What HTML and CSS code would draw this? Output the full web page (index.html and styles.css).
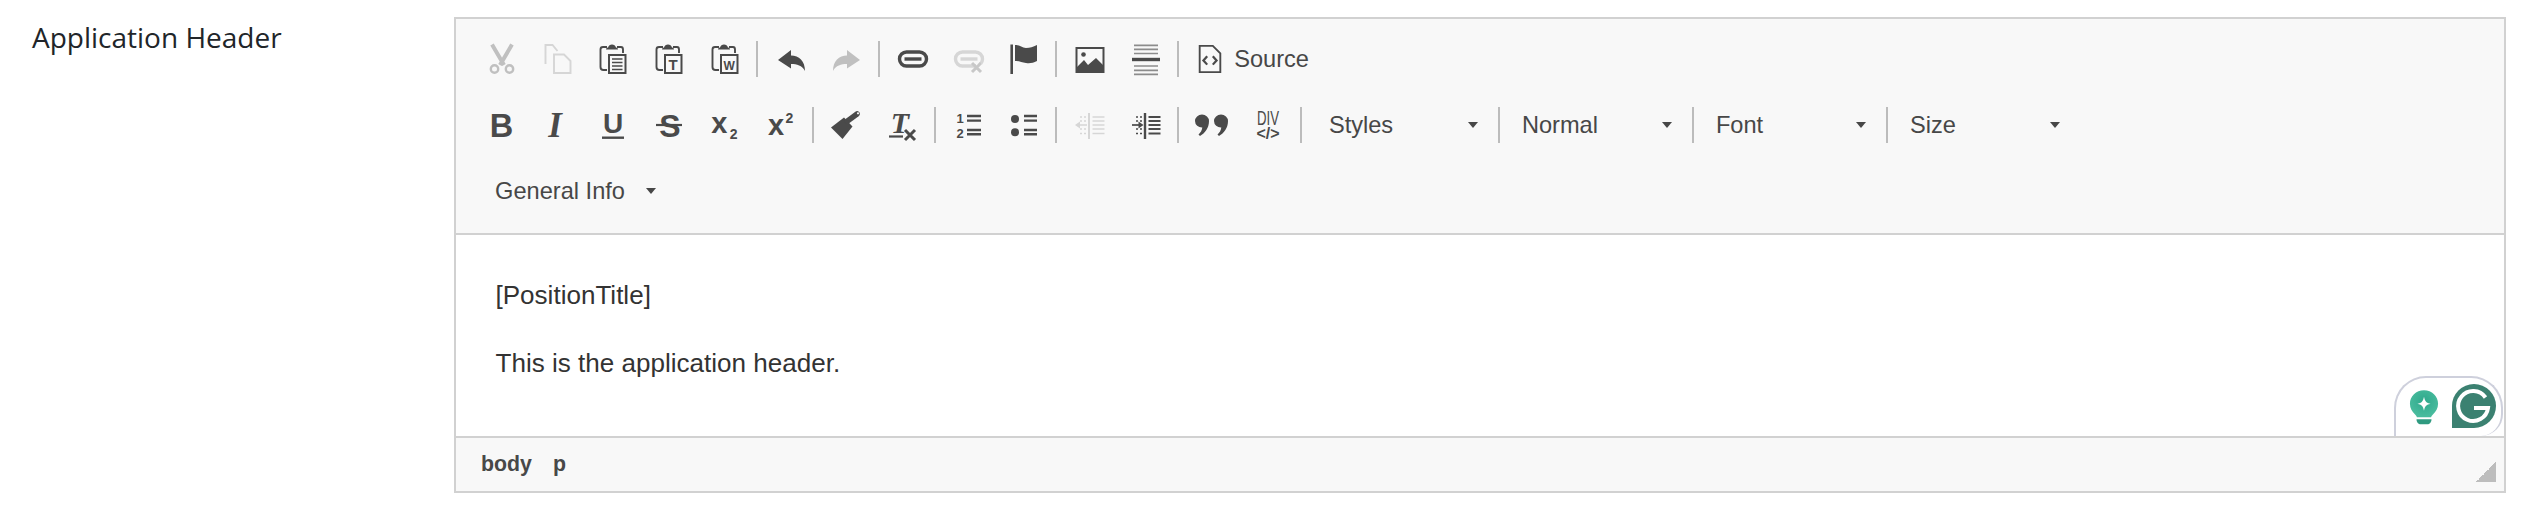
FILE: index.html
```html
<!DOCTYPE html>
<html lang="en">
<head>
<meta charset="utf-8">
<title>Application Header</title>
<link rel="stylesheet" href="styles.css">
</head>
<body>
<div class="field">
  <label class="field-label">Application Header</label>
  <div class="editor">
    <div class="toolbar">
      <div class="row">
        <span class="btn"><svg class="ic off" viewBox="0 0 32 32"><path class="s" stroke-width="4" d="M6 1.500l12 20.500M26 1.500L14 22"/><circle class="s" stroke-width="2.400" cx="8.500" cy="26" r="3.700"/><circle class="s" stroke-width="2.400" cx="23.500" cy="26" r="3.700"/></svg></span>
        <span class="btn"><svg class="ic faint" viewBox="0 0 32 32"><path class="s" stroke-width="1.900" d="M3.500 21V2h7l5 6M12 11.500h10l6.500 6.500v12H12z"/></svg></span>
        <span class="btn"><svg class="ic" viewBox="0 0 32 32"><path class="s" stroke-width="1.900" d="M10 4H6Q3.500 4 3.500 6.500V24Q3.500 27 6.500 27H10M20 4h4q2 0 2 2.500V10"/><path d="M9 6.500q0-2 2-2 1-3 4-3t4 3q2 0 2 2z"/><rect class="s" stroke-width="2" x="12" y="12" width="16.500" height="18"/><path class="s" stroke-width="1.700" d="M15 16h10.500M15 19.500h10.500M15 23h10.500M15 26.500h10.500"/></svg></span>
        <span class="btn"><svg class="ic" viewBox="0 0 32 32"><path class="s" stroke-width="1.900" d="M10 4H6Q3.500 4 3.500 6.500V24Q3.500 27 6.500 27H10M20 4h4q2 0 2 2.500V10"/><path d="M9 6.500q0-2 2-2 1-3 4-3t4 3q2 0 2 2z"/><rect class="s" stroke-width="2" x="12" y="12" width="16.500" height="18"/><text class="gl gl-b" x="20.200" y="27" font-size="15">T</text></svg></span>
        <span class="btn"><svg class="ic" viewBox="0 0 32 32"><path class="s" stroke-width="1.900" d="M10 4H6Q3.500 4 3.500 6.500V24Q3.500 27 6.500 27H10M20 4h4q2 0 2 2.500V10"/><path d="M9 6.500q0-2 2-2 1-3 4-3t4 3q2 0 2 2z"/><rect class="s" stroke-width="2" x="12" y="12" width="16.500" height="18"/><text class="gl gl-b" x="20.200" y="26.500" font-size="12">W</text></svg></span>
        <span class="sep"></span>
        <span class="btn"><svg class="ic" viewBox="0 0 32 32"><path d="M3 17L16 7v5.500c8 0 14 5.500 14 15.500-3-5.500-8-7-14-7v4.500z"/></svg></span>
        <span class="btn"><svg class="ic off" viewBox="0 0 32 32"><path d="M29 17L16 7v5.500C8 12.500 2 18 2 28c3-5.500 8-7 14-7v4.500z"/></svg></span>
        <span class="sep"></span>
        <span class="btn"><svg class="ic" viewBox="0 0 32 32"><rect class="s" stroke-width="3.400" x="2.500" y="9" width="27" height="14" rx="7"/><path class="s" stroke-width="3.400" d="M7.500 16h17"/></svg></span>
        <span class="btn"><svg class="ic faint" viewBox="0 0 32 32"><rect class="s" stroke-width="3.400" x="2.500" y="9" width="27" height="14" rx="7"/><path class="s" stroke-width="3.400" d="M7.500 16h17"/><path class="bgs" stroke-width="9" d="M23 25h6"/><path class="s off-s" stroke-width="3" d="M19 20l9 9M28 20l-9 9"/></svg></span>
        <span class="btn"><svg class="ic" viewBox="0 0 32 32"><path class="s" stroke-width="2.600" d="M3.700 1.500V31"/><path d="M7 2c5 0 7 3 11 3s7-1 11-3v16c-4 2-7 2.500-11 2s-6-2-11-2z"/></svg></span>
        <span class="sep"></span>
        <span class="btn"><svg class="ic" viewBox="0 0 32 32"><rect class="s" stroke-width="2" x="2.500" y="5" width="27" height="24"/><circle cx="9.500" cy="11.500" r="2.300"/><path d="M3 28v-4l7-7 4 5 8-7 7 7v6z"/></svg></span>
        <span class="btn"><svg class="ic" viewBox="0 0 32 32"><path class="s thin" stroke-width="1.700" d="M4 2.300h24M4 6.400h24M4 10.500h24M4 23h24M4 27.300h24M4 31.300h24"/><path class="s" stroke-width="3.400" d="M2 16.500h28"/></svg></span>
        <span class="sep"></span>
        <span class="btn btn-text"><svg class="ic ic-source" viewBox="0 0 32 32"><path class="s" stroke-width="2" d="M5 2h14l8 8v20H5z"/><path class="s" stroke-width="2.400" d="M13 13l-4 4.500 4 4.500M19 13l4 4.500-4 4.500"/></svg><span class="btn-label">Source</span></span>
      </div>
      <div class="row">
        <span class="btn"><svg class="ic" viewBox="0 0 32 32"><text class="gl gl-b" x="15.500" y="27.700" font-size="32.500">B</text></svg></span>
        <span class="btn"><svg class="ic" viewBox="0 0 32 32"><text class="gl gl-si" x="13" y="28" font-size="35">I</text></svg></span>
        <span class="btn"><svg class="ic" viewBox="0 0 32 32"><text class="gl gl-b" x="16" y="24.300" font-size="28">U</text><path class="s" stroke-width="2.400" d="M5 28.700h22"/></svg></span>
        <span class="btn"><svg class="ic" viewBox="0 0 32 32"><text class="gl gl-b" x="17" y="27.500" font-size="32">S</text><path class="s" stroke-width="2.200" d="M3 16h26"/></svg></span>
        <span class="btn"><svg class="ic" viewBox="0 0 32 32"><text class="gl gl-b" x="10.400" y="24.300" font-size="29">x</text><text class="gl gl-b" x="24.700" y="30.300" font-size="14">2</text></svg></span>
        <span class="btn"><svg class="ic" viewBox="0 0 32 32"><text class="gl gl-b" x="11" y="26" font-size="29">x</text><text class="gl gl-b" x="24.300" y="14.300" font-size="14">2</text></svg></span>
        <span class="sep"></span>
        <span class="btn"><svg class="ic" viewBox="0 0 32 32"><path d="M0 18.500L11.500 30l10-12.500-8.500-9z"/><path class="s" stroke-width="5.500" stroke-linecap="round" d="M16.500 12L26 5"/><circle class="dot-hole" cx="27" cy="4.300" r="1.100"/></svg></span>
        <span class="btn"><svg class="ic" viewBox="0 0 32 32"><text class="gl gl-si" x="13" y="24" font-size="30">T</text><path class="s" stroke-width="2.200" d="M2 27.500h14"/><path class="s" stroke-width="3" d="M18 21l10 10M28 21L18 31"/></svg></span>
        <span class="sep"></span>
        <span class="btn"><svg class="ic" viewBox="0 0 32 32"><text class="gl gl-b" x="7" y="14" font-size="13">1</text><text class="gl gl-b" x="7" y="29" font-size="13">2</text><path class="s" stroke-width="2.400" d="M14 7h14M14 11.600h14M14 21h14M14 25.300h14"/></svg></span>
        <span class="btn"><svg class="ic" viewBox="0 0 32 32"><circle cx="7" cy="10" r="4"/><circle cx="7" cy="23.300" r="4"/><path class="s" stroke-width="2.400" d="M16 7h13M16 11.600h13M16 21h13M16 25.300h13"/></svg></span>
        <span class="sep"></span>
        <span class="btn"><svg class="ic faint" viewBox="0 0 32 32"><path class="s" stroke-width="2" d="M15 4v26"/><path class="s" stroke-width="1.700" d="M18.500 8h12M18.500 12h12M18.500 16h12M18.500 20h12M18.500 24.500h12"/><path class="s" stroke-width="1.500" d="M6 16h7"/><path d="M1 16l5-3.500v7z"/><path class="s" stroke-width="1.600" stroke-dasharray="2 2" d="M6 8h7M6 12h7M6 20h7M6 24.500h7"/></svg></span>
        <span class="btn"><svg class="ic" viewBox="0 0 32 32"><path class="s" stroke-width="2.400" d="M15 4v26"/><path class="s" stroke-width="2" d="M18.500 8h12M18.500 12h12M18.500 16h12M18.500 20h12M18.500 24.500h12"/><path class="s" stroke-width="1.700" d="M2 16h7"/><path d="M13.500 16l-5-3.500v7z"/><path class="s" stroke-width="1.600" stroke-dasharray="2 2" d="M6 8h7M6 12h7M6 20h7M6 24.500h7"/></svg></span>
        <span class="sep"></span>
        <span class="btn"><svg class="ic" viewBox="0 0 32 32"><path d="M-1 12a7 6.500 0 1 1 14 0c0 7-4 12-9 15l-1.500-1.500c2-2 3.500-4 3.800-7A7 6.500 0 0 1-1 12zM18 12a7 6.500 0 1 1 14 0c0 7-4 12-9 15l-1.500-1.500c2-2 3.500-4 3.800-7A7 6.500 0 0 1 18 12z"/></svg></span>
        <span class="btn"><svg class="ic" viewBox="0 0 32 32"><text class="gl gl-n" x="16" y="16" font-size="20" textLength="22" lengthAdjust="spacingAndGlyphs">DIV</text><text class="gl gl-b" x="16" y="30" font-size="16" textLength="23" lengthAdjust="spacingAndGlyphs">&lt;/&gt;</text></svg></span>
        <span class="sep sep-wide"></span>
        <span class="combo combo-first"><span class="combo-text">Styles</span><span class="caret"></span></span>
        <span class="sep sep-flush"></span>
        <span class="combo"><span class="combo-text">Normal</span><span class="caret"></span></span>
        <span class="sep sep-flush"></span>
        <span class="combo"><span class="combo-text">Font</span><span class="caret"></span></span>
        <span class="sep sep-flush"></span>
        <span class="combo"><span class="combo-text">Size</span><span class="caret"></span></span>
      </div>
      <div class="row">
        <span class="combo combo-auto"><span class="combo-text">General Info</span><span class="caret"></span></span>
      </div>
    </div>
    <div class="content">
      <p>[PositionTitle]</p>
      <p>This is the application header.</p>
      <div class="grammarly">
        <svg class="bulb" viewBox="0 0 32 38"><defs><radialGradient id="bulbFill" cx="50%" cy="40%" r="55%"><stop offset="0" stop-color="#2fa98c"/><stop offset="1" stop-color="#48bb9d"/></radialGradient></defs><path fill="url(#bulbFill)" d="M16 1C7.500 1 1 7.500 1 15.500c0 5 2.500 8.500 5 11 1.500 1.500 2 2.500 2.500 3.500h15c.5-1 1-2 2.500-3.500 2.500-2.500 5-6 5-11C31 7.500 24.500 1 16 1z"/><path fill="#fff" d="M16 8c1 5 2.500 6.500 7 7.500-4.500 1-6 2.500-7 7.500-1-5-2.500-6.500-7-7.500 4.500-1 6-2.500 7-7.500z"/><path fill="#2f9a80" d="M8 32h16c0 3-2 5.500-4.500 5.500h-7C10 37.500 8 35 8 32z"/></svg>
        <span class="g-badge"><svg viewBox="0 0 44 44"><path class="g-ring" d="M33.500 13.500A15 15 0 1 0 36 24H22"/></svg></span>
      </div>
    </div>
    <div class="statusbar">
      <span class="crumb">body</span>
      <span class="crumb">p</span>
      <span class="resizer"></span>
    </div>
  </div>
</div>
</body>
</html>
```
FILE: styles.css
```css
html, body {
  margin: 0;
  padding: 0;
  background: #fff;
}
.field {
  display: flex;
  align-items: flex-start;
  padding-top: 17px;
}
.field-label {
  width: 454px;
  flex: none;
  box-sizing: border-box;
  padding: 1px 0 0 32px;
  font: 400 28px/38px "Open Sans", sans-serif;
  color: #212529;
}
.editor {
  width: 2052px;
  height: 476px;
  box-sizing: border-box;
  border: 2px solid #d1d1d1;
  display: flex;
  flex-direction: column;
  font-family: "Liberation Sans", Arial, sans-serif;
}
.toolbar {
  height: 216px;
  box-sizing: border-box;
  flex: none;
  padding: 7px 0 0 18.1px;
  background: #f8f8f8;
  border-bottom: 2px solid #d1d1d1;
}
.row {
  height: 66px;
  display: flex;
  align-items: center;
}
.btn {
  flex: none;
  width: 55.75px;
  height: 48px;
  display: flex;
  align-items: center;
  justify-content: center;
}
.btn-text {
  width: auto;
  padding-left: 11px;
}
.btn-label {
  margin-left: 9px;
  font-size: 23.6px;
  color: #474747;
}
.ic {
  width: 32px;
  height: 32px;
  fill: #4a4a4a;
  flex: none;
  overflow: visible;
}
.ic-source {
  width: 30px;
  height: 32px;
}
.s {
  fill: none;
  stroke: #4a4a4a;
}
.thin {
  stroke: #8c8c8c;
}
.off {
  fill: #c0c0c0;
}
.off .s {
  stroke: #c0c0c0;
}
.faint {
  fill: #d6d6d6;
}
.faint .s {
  stroke: #d6d6d6;
}
.faint .off-s {
  stroke: #c8c8c8;
}
.bgs {
  stroke: #f8f8f8;
  fill: none;
}
.dot-hole {
  fill: #f8f8f8;
}
.gl {
  text-anchor: middle;
  font-family: "Liberation Sans", Arial, sans-serif;
}
.gl-b {
  font-weight: 700;
}
.gl-n {
  font-weight: 400;
}
.gl-si {
  font-family: "Liberation Serif", "Times New Roman", serif;
  font-weight: 700;
  font-style: italic;
}
.sep {
  flex: none;
  width: 2px;
  height: 36px;
  margin: 0 5.1px 0 3.2px;
  background: #bcbcbc;
}
.sep-wide {
  margin: 0 0 0 4.2px;
}
.sep-flush {
  margin: 0;
}
.combo {
  flex: none;
  width: 192px;
  box-sizing: border-box;
  padding: 0 19.5px 0 22px;
  display: flex;
  align-items: center;
  justify-content: space-between;
  color: #474747;
  font-size: 23.6px;
}
.combo-first {
  width: 196px;
  padding-left: 27px;
}
.combo-auto {
  width: auto;
  padding-left: 21px;
  gap: 21px;
}
.caret {
  flex: none;
  width: 0;
  height: 0;
  border-style: solid;
  border-width: 6px 5.500px 0;
  border-color: #474747 transparent transparent;
}
.content {
  flex: 1;
  position: relative;
  background: #fff;
  padding: 41.500px 0 0 39.500px;
  font-size: 26.05px;
  line-height: 36px;
  color: #333;
}
.content p {
  margin: 0 0 32px;
}
.grammarly {
  position: absolute;
  right: 1px;
  bottom: 0;
  width: 109px;
  height: 60px;
  box-sizing: border-box;
  border: 2px solid #ced0dc;
  border-bottom: 0;
  border-radius: 32px 32px 22px 0;
  display: flex;
  align-items: flex-start;
  background: #fff;
}
.bulb {
  width: 30px;
  height: 36px;
  margin: 11px 0 0 13px;
  flex: none;
}
.g-badge {
  width: 44px;
  height: 44px;
  margin: 6px 0 0 13px;
  flex: none;
  border-radius: 50% 50% 50% 0;
  background: #3b8171;
  display: block;
}
.g-badge svg {
  width: 44px;
  height: 44px;
  display: block;
}
.g-ring {
  fill: none;
  stroke: #fff;
  stroke-width: 4;
}
.statusbar {
  height: 55px;
  flex: none;
  box-sizing: border-box;
  border-top: 2px solid #d1d1d1;
  background: #f8f8f8;
  position: relative;
  padding: 0 0 1px 25px;
  display: flex;
  align-items: center;
  gap: 21px;
  font-size: 21.3px;
  font-weight: 700;
  color: #484848;
}
.resizer {
  position: absolute;
  right: 8px;
  bottom: 9px;
  width: 20px;
  height: 20px;
  background: linear-gradient(135deg, transparent 50%, #bdbdbd 50%);
}
```
